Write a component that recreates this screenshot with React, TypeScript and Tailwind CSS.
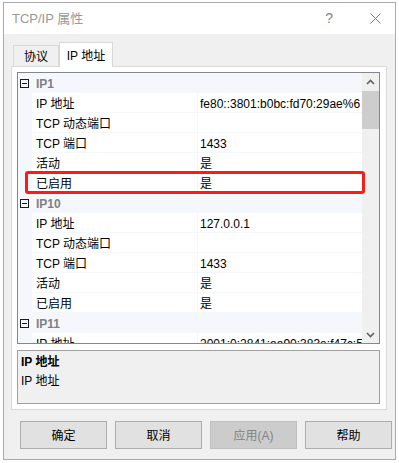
import React from 'react';

type Prop = { label: string; value: string };
type Group = { name: string; props: Prop[] };

const groups: Group[] = [
  {
    name: 'IP1',
    props: [
      { label: 'IP 地址', value: 'fe80::3801:b0bc:fd70:29ae%6' },
      { label: 'TCP 动态端口', value: '' },
      { label: 'TCP 端口', value: '1433' },
      { label: '活动', value: '是' },
      { label: '已启用', value: '是' },
    ],
  },
  {
    name: 'IP10',
    props: [
      { label: 'IP 地址', value: '127.0.0.1' },
      { label: 'TCP 动态端口', value: '' },
      { label: 'TCP 端口', value: '1433' },
      { label: '活动', value: '是' },
      { label: '已启用', value: '是' },
    ],
  },
  {
    name: 'IP11',
    props: [{ label: 'IP 地址', value: '2001:0:2841:aa90:383e:f47c:54d5:8a9f' }],
  },
];

function CategoryRow({ name }: { name: string }) {
  return (
    <div className="flex items-center h-[20px] bg-[#f4f7fc] shrink-0">
      <div className="ml-[2px] w-[9px] h-[9px] border border-[#1a1a1a] flex items-center justify-center">
        <div className="w-[5px] h-px bg-[#1a1a1a]" />
      </div>
      <span className="ml-[7px] pt-[2px] font-bold text-[#808080] text-[12px] leading-none">{name}</span>
    </div>
  );
}

function PropRow({ label, value }: Prop) {
  return (
    <div className="flex h-[20px] shrink-0 bg-[#f4f7fc]">
      <div className="w-[14px] shrink-0" />
      <div className="w-[165px] shrink-0 bg-white mb-px mr-px flex items-center pl-[4px] pt-[2px] text-[12px] text-black whitespace-nowrap">
        {label}
      </div>
      <div className="flex-1 bg-white mb-px flex items-center pl-[2px] pt-[2px] text-[12px] text-black whitespace-nowrap overflow-hidden">
        {value}
      </div>
    </div>
  );
}

function Chevron({ up }: { up?: boolean }) {
  return (
    <svg width="9" height="6" viewBox="0 0 9 6" className={up ? '' : 'rotate-180'}>
      <path d="M1 5 L4.5 1.5 L8 5" fill="none" stroke="#606060" strokeWidth="1.6" />
    </svg>
  );
}

export default function App() {
  return (
    <div className="w-[399px] h-[463px] bg-white font-['Liberation_Sans','Noto_Sans_CJK_SC',sans-serif] text-[12px] overflow-hidden">
      <div className="ml-[3px] mt-[2px] w-[393px] h-[458px] border border-[#aaaaaa] flex flex-col bg-[#f0f0f0]">
        {/* Title bar */}
        <div className="h-[31px] bg-white flex items-center shrink-0">
          <span className="pl-[8px] pt-[1px] text-[13px] text-[#999999]">TCP/IP 属性</span>
          <span className="ml-auto text-[14px] text-[#888888]">?</span>
          <span className="ml-[37px] mr-[14px] text-[#888888]">
            <svg width="11" height="11" viewBox="0 0 11 11">
              <path d="M0.5 0.5 L10.5 10.5 M10.5 0.5 L0.5 10.5" stroke="#777777" strokeWidth="1" />
            </svg>
          </span>
        </div>

        {/* Body */}
        <div className="pl-[7px] pt-[8px] flex flex-col">
          {/* Tabs */}
          <div className="flex items-end h-[25px] -mb-px relative z-10">
            <div className="ml-[2px] w-[46px] h-[21px] border border-b-0 border-[#d9d9d9] bg-[#f0f0f0] flex items-center justify-center pt-[2px] text-[12px] text-black mb-px">
              协议
            </div>
            <div className="w-[54px] h-[25px] border border-b-0 border-[#d9d9d9] bg-white flex items-center justify-center pt-[1px] text-[12px] text-black">
              IP 地址
            </div>
          </div>

          {/* Panel */}
          <div className="w-[376px] h-[344px] border border-[#d9d9d9] bg-white pl-[5px] pt-[5px] flex flex-col">
            {/* Property grid */}
            <div className="relative w-[363px] h-[272px] border border-[#828790] flex overflow-hidden shrink-0">
              <div className="flex-1 flex flex-col overflow-hidden">
                {groups.map((g) => (
                  <React.Fragment key={g.name}>
                    <CategoryRow name={g.name} />
                    {g.props.map((p, i) => (
                      <PropRow key={i} {...p} />
                    ))}
                  </React.Fragment>
                ))}
              </div>
              {/* Scrollbar */}
              <div className="w-[17px] bg-[#f0f0f0] flex flex-col shrink-0">
                <div className="h-[17px] flex items-center justify-center">
                  <Chevron up />
                </div>
                <div className="h-[38px] bg-[#cdcdcd] mt-px" />
                <div className="flex-1" />
                <div className="h-[17px] flex items-center justify-center">
                  <Chevron />
                </div>
              </div>
              {/* Highlight */}
              <div className="absolute left-[7px] top-[98px] w-[340px] h-[23px] border-[3px] border-[#ff1a1a] rounded-[3px]" />
            </div>

            {/* Description */}
            <div className="mt-[6px] w-[363px] h-[54px] border border-[#a0a0a0] bg-[#f0f0f0] pl-[3px] pt-[2px] flex flex-col">
              <span className="font-bold text-[12px] text-black h-[19px] leading-[19px]">IP 地址</span>
              <span className="text-[12px] text-black h-[19px] leading-[19px]">IP 地址</span>
            </div>
          </div>
        </div>

        {/* Buttons */}
        <div className="pl-[16px] mt-[11px] flex gap-[8px]">
          {['确定', '取消', '应用(A)', '帮助'].map((t) => {
            const disabled = t === '应用(A)';
            return (
              <div
                key={t}
                className={
                  disabled
                    ? 'w-[87px] h-[28px] border border-[#bfbfbf] bg-[#cccccc] text-[#838383] flex items-center justify-center pt-[1px] text-[12px]'
                    : 'w-[87px] h-[28px] border border-[#adadad] bg-[#e1e1e1] text-black flex items-center justify-center pt-[1px] text-[12px]'
                }
              >
                {t}
              </div>
            );
          })}
        </div>
      </div>
    </div>
  );
}
